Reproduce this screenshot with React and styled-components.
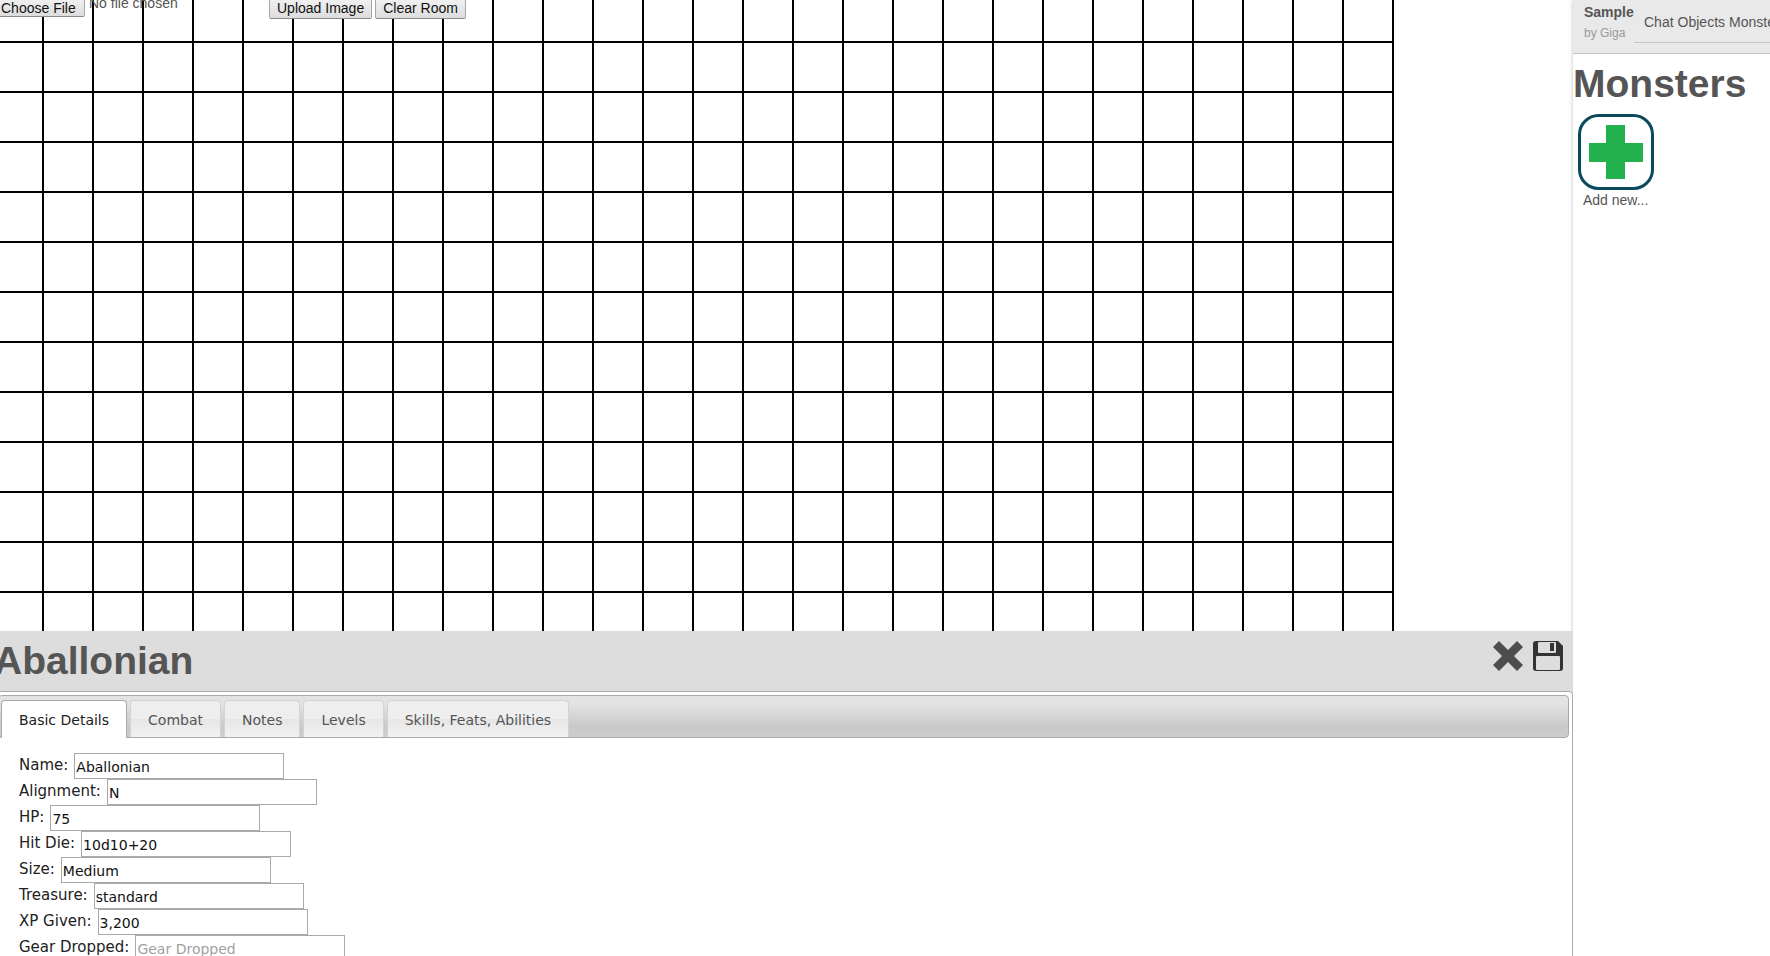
import React from 'react';
import styled, { createGlobalStyle, css } from 'styled-components';

const GlobalStyle = createGlobalStyle`
  *, *::before, *::after { box-sizing: border-box; }
  body { margin: 0; overflow: hidden; background: #fff; color: #555; font: 14px/20px "Liberation Sans", Arial, sans-serif; }
  h1, h2, p, ul { margin: 0; padding: 0; }
`;

const Page = styled.div`
  display: flex;
  height: 100vh;
  overflow: hidden;
`;

const Main = styled.main`
  flex: 1;
  min-width: 0;
  display: flex;
  flex-direction: column;
  margin: -7px 0 0 -6px;
`;

const Board = styled.section`
  flex: 1;
  min-height: 0;
  width: 1400px;
  background-image:
    linear-gradient(to left, #000 2px, transparent 2px),
    linear-gradient(to top, #000 2px, transparent 2px);
  background-size: 50px 50px;
`;

const Toolbar = styled.form`
  display: flex;
  align-items: flex-start;
  gap: 3px;
  padding-top: 2px;
`;

const buttonLook = css`
  height: 24px;
  padding: 1px 7px 0;
  border: 1px solid #a6a6a6;
  border-bottom-color: #8a8a8a;
  border-radius: 2px;
  background: linear-gradient(#f4f4f4, #dddddd);
  color: #111;
  font: 14px/20px "Liberation Sans", Arial, sans-serif;
`;

const Button = styled.button`
  ${buttonLook}
`;

const FilePicker = styled.div`
  display: flex;
  align-items: flex-start;
  gap: 4px;
  width: 272px;
`;

const FileInput = styled.input`
  width: 91px;
  height: 22px;
  overflow: hidden;
  color: transparent;
  font-size: 14px;
  &::file-selector-button {
    ${buttonLook}
    height: 22px;
    width: 91px;
    padding: 2px 6px 0;
    margin: 0;
    text-align: left;
  }
`;

const FileStatus = styled.label`
  line-height: 16px;
`;

const Panel = styled.section`
  position: relative;
  z-index: 1;
  flex: 0 0 34vh;
  overflow: hidden;
  background: #ddd;
`;

const PanelHeader = styled.header`
  display: flex;
  justify-content: space-between;
  height: 60px;
  padding-right: 9px;
`;

const Title = styled.h1`
  color: #555;
  font-size: 39px;
  line-height: 60px;
  font-weight: bold;
`;

const Actions = styled.div`
  display: flex;
  gap: 8px;
  padding-top: 9px;
`;

const IconButton = styled.button`
  width: 32px;
  height: 32px;
  padding: 0;
  border: 0;
  background: none;
  svg { display: block; }
`;

const Tabs = styled.div`
  height: 100%;
  padding: 3px;
  border: 1px solid #aaa;
  border-radius: 4px;
  background: #fff;
  color: #222;
  font-family: "DejaVu Sans", Verdana, sans-serif;
  font-size: 14px;
`;

const TabList = styled.div`
  display: flex;
  align-items: flex-end;
  gap: 3px;
  height: 43px;
  padding-left: 2px;
  border: 1px solid #aaa;
  border-radius: 4px;
  background: linear-gradient(#e3e3e3 20%, #c9c9c9 75%, #cccccc);
`;

const Tab = styled.button`
  height: 37px;
  padding: 2px 17px 0;
  border: 1px solid #d3d3d3;
  border-bottom: 0;
  border-radius: 4px 4px 0 0;
  background: linear-gradient(#eeeeee 50%, #e6e6e6 50%, #f2f2f2);
  color: #555;
  font: inherit;
  white-space: nowrap;
  ${({ $active }) => $active && css`
    height: 38px;
    margin-bottom: -1px;
    border-color: #aaa;
    background: #fff;
    color: #212121;
  `}
`;

const Fields = styled.div`
  padding: 15px 21px;
`;

const Field = styled.div`
  display: flex;
  gap: 6px;
  height: 26px;
  label { font-size: 15px; line-height: 24px; }
`;

const TextInput = styled.input`
  width: 210px;
  height: 26px;
  padding: 2px 1px 0;
  border: 1px solid #a9a9a9;
  background: #fff;
  color: #111;
  font: inherit;
  &::placeholder { color: #a0a0a0; }
`;

const Sidebar = styled.aside`
  flex: 0 0 197px;
  overflow: hidden;
  background: #fff;
  box-shadow: 0 0 4px rgba(0, 0, 0, 0.25);
`;

const SidebarHeader = styled.header`
  display: flex;
  height: 54px;
  padding-left: 11px;
  border-bottom: 1px solid #c6c6c6;
  background: #e9e9e9;
`;

const Room = styled.div`
  flex: 0 0 50px;
  padding-top: 2px;
`;

const RoomName = styled.strong`
  display: block;
`;

const Owner = styled.p`
  color: #999;
  font-size: 12px;
  line-height: 22px;
`;

const SideNav = styled.nav`
  display: flex;
  gap: 4px;
  flex: none;
  height: 43px;
  padding: 12px 10px 0;
  border-bottom: 1px solid #c6c6c6;
  a { color: #555; text-decoration: none; }
`;

const SideTitle = styled.h2`
  font-size: 39px;
  line-height: 60px;
`;

const AddMonster = styled.button`
  display: block;
  margin-left: 5px;
  padding: 0;
  border: 0;
  background: none;
  color: #555;
  font: inherit;
  text-align: left;
  svg { display: block; }
  span { display: block; padding-left: 5px; }
`;

const tabs = ['Basic Details', 'Combat', 'Notes', 'Levels', 'Skills, Feats, Abilities'];

const fields = [
  ['Name', 'Aballonian'],
  ['Alignment', 'N'],
  ['HP', '75'],
  ['Hit Die', '10d10+20'],
  ['Size', 'Medium'],
  ['Treasure', 'standard'],
  ['XP Given', '3,200'],
  ['Gear Dropped', ''],
];

const CloseIcon = () => (
  <svg width="32" height="32" viewBox="0 0 32 32" aria-hidden="true">
    <path d="M7 1 16 10 25 1 31 7 22 16 31 25 25 31 16 22 7 31 1 25 10 16 1 7Z" fill="#4d4d4f" />
  </svg>
);

const SaveIcon = () => (
  <svg width="32" height="32" viewBox="0 0 32 32" aria-hidden="true">
    <path d="M4 1H26L31 6V28Q31 31 28 31H4Q1 31 1 28V4Q1 1 4 1Z" fill="#333" />
    <path d="M7 2H23Q24 2 24 3V12Q24 13 23 13H7Q6 13 6 12V3Q6 2 7 2Z" fill="#ddd" />
    <path d="M18 3H22V11H18Z" fill="#333" />
    <path d="M5 16H27Q28 16 28 17V29Q28 30 27 30H5Q4 30 4 29V17Q4 16 5 16Z" fill="#ddd" />
  </svg>
);

const PlusIcon = () => (
  <svg width="76" height="76" viewBox="0 0 76 76" aria-hidden="true">
    <rect x="1.5" y="1.5" width="73" height="73" rx="19" fill="#fff" stroke="#0b4a5c" strokeWidth="3" />
    <path d="M28 11H47V29H65V48H47V65H28V48H11V29H28Z" fill="#22b14c" />
  </svg>
);

export default function App() {
  return (
    <Page>
      <GlobalStyle />
      <Main>
        <Board>
          <Toolbar onSubmit={(e) => e.preventDefault()}>
            <FilePicker>
              <FileInput id="room-image" type="file" />
              <FileStatus htmlFor="room-image">No file chosen</FileStatus>
            </FilePicker>
            <Button>Upload Image</Button>
            <Button type="button">Clear Room</Button>
          </Toolbar>
        </Board>
        <Panel>
          <PanelHeader>
            <Title>Aballonian</Title>
            <Actions>
              <IconButton aria-label="Close"><CloseIcon /></IconButton>
              <IconButton aria-label="Save"><SaveIcon /></IconButton>
            </Actions>
          </PanelHeader>
          <Tabs>
            <TabList role="tablist">
              {tabs.map((name, i) => (
                <Tab key={name} role="tab" aria-selected={i === 0} $active={i === 0}>{name}</Tab>
              ))}
            </TabList>
            <Fields role="tabpanel">
              {fields.map(([name, value]) => (
                <Field key={name}>
                  <label htmlFor={name}>{name}:</label>
                  <TextInput id={name} defaultValue={value} placeholder={name} />
                </Field>
              ))}
            </Fields>
          </Tabs>
        </Panel>
      </Main>
      <Sidebar>
        <SidebarHeader>
          <Room>
            <RoomName>Sample</RoomName>
            <Owner>by Giga</Owner>
          </Room>
          <SideNav>
            <a href="#chat">Chat</a>
            <a href="#objects">Objects</a>
            <a href="#monsters">Monsters</a>
          </SideNav>
        </SidebarHeader>
        <SideTitle>Monsters</SideTitle>
        <AddMonster>
          <PlusIcon />
          <span>Add new...</span>
        </AddMonster>
      </Sidebar>
    </Page>
  );
}
